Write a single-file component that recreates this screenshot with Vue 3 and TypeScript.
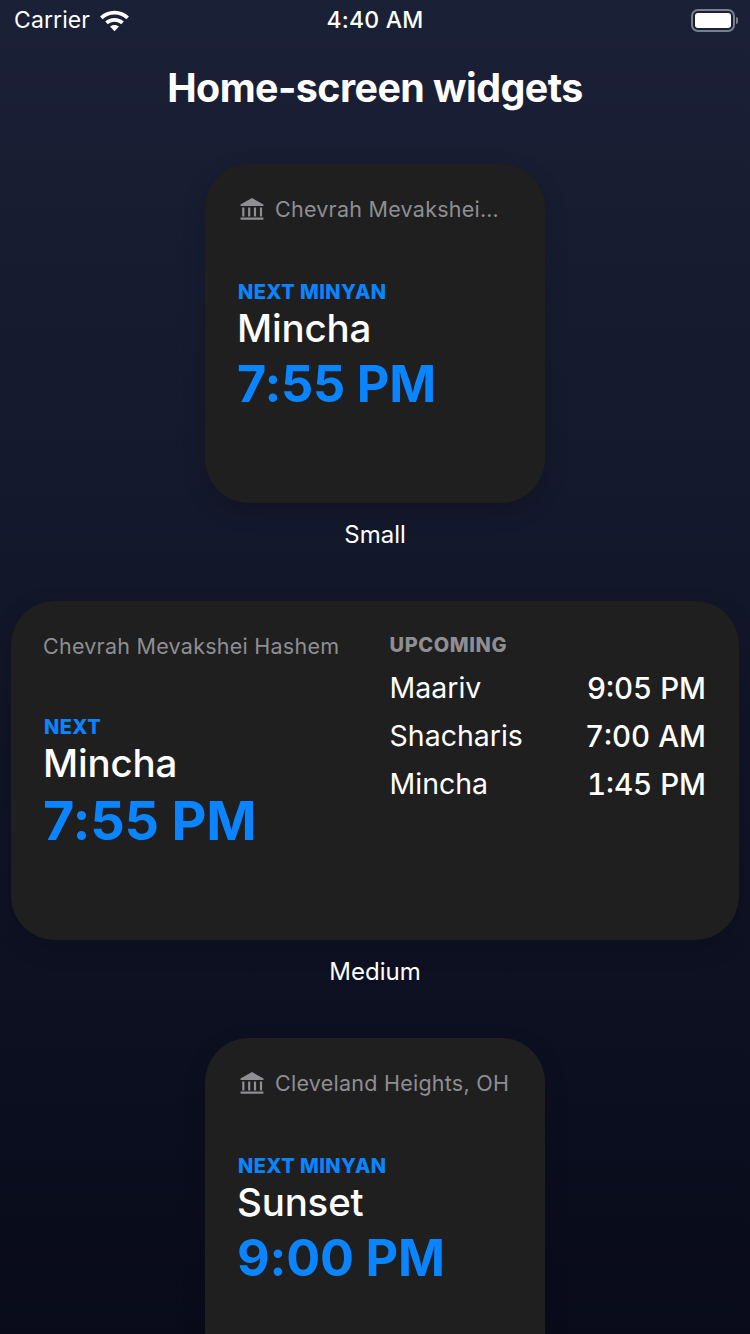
<script setup lang="ts">
interface Prayer {
  name: string
  time: string
}

const upcoming: Prayer[] = [
  { name: 'Maariv', time: '9:05 PM' },
  { name: 'Shacharis', time: '7:00 AM' },
  { name: 'Mincha', time: '1:45 PM' },
]
</script>

<template>
  <div class="screen">
    <header class="status">
      <div class="status-left">
        <span>Carrier</span>
        <svg class="wifi" width="33" height="25" viewBox="0 0 32 24">
          <path d="M16 2.500c5.400 0 10.300 2 14 5.500l-2.500 2.700C24.500 7.900 20.500 6.200 16 6.200S7.500 7.900 4.500 10.700L2 8C5.700 4.500 10.600 2.500 16 2.500z" fill="#fff" />
          <path d="M16 9.500c3.500 0 6.600 1.300 9 3.500l-2.500 2.700c-1.700-1.600-4-2.500-6.500-2.500s-4.800.9-6.500 2.500L7 13c2.400-2.200 5.500-3.500 9-3.500z" fill="#fff" />
          <path d="M16 16.300c1.700 0 3.200.6 4.300 1.600L16 22.500l-4.300-4.600c1.100-1 2.600-1.600 4.300-1.600z" fill="#fff" />
        </svg>
      </div>
      <span class="clock">4:40 AM</span>
      <div class="status-right">
        <span class="battery"><span class="battery-fill"></span></span>
        <span class="battery-cap"></span>
      </div>
    </header>

    <h1 class="title">Home-screen widgets</h1>

    <section class="widget-block">
      <article class="widget small">
        <div class="location">
          <svg class="bank" width="26" height="26" viewBox="0 0 26 26">
            <path d="M13 2 24.500 8.500V10h-23V8.500z" fill="#8e8e93" />
            <path d="M3.200 11.500h2.200v9H3.200zM9.100 11.500h2.200v9H9.100zM14.900 11.500h2.200v9h-2.200zM20.900 11.500h2.200v9h-2.200z" fill="#8e8e93" />
            <rect x="1.500" y="21.500" width="23" height="2.200" rx=".6" fill="#8e8e93" />
          </svg>
          <span class="location-text">Chevrah Mevakshei…</span>
        </div>
        <div class="next">
          <div class="eyebrow">NEXT MINYAN</div>
          <div class="prayer">Mincha</div>
          <div class="time">7:55 PM</div>
        </div>
      </article>
      <div class="caption">Small</div>
    </section>

    <section class="widget-block">
      <article class="widget medium">
        <div class="medium-left">
          <div class="location-text plain">Chevrah Mevakshei Hashem</div>
          <div class="next next-medium">
            <div class="eyebrow">NEXT</div>
            <div class="prayer">Mincha</div>
            <div class="time time-large">7:55 PM</div>
          </div>
        </div>
        <div class="medium-right">
          <div class="upcoming-label">UPCOMING</div>
          <div v-for="item in upcoming" :key="item.name" class="row">
            <span>{{ item.name }}</span>
            <span class="row-time">{{ item.time }}</span>
          </div>
        </div>
      </article>
      <div class="caption">Medium</div>
    </section>

    <section class="widget-block">
      <article class="widget small">
        <div class="location">
          <svg class="bank" width="26" height="26" viewBox="0 0 26 26">
            <path d="M13 2 24.500 8.500V10h-23V8.500z" fill="#8e8e93" />
            <path d="M3.200 11.500h2.200v9H3.200zM9.100 11.500h2.200v9H9.100zM14.900 11.500h2.200v9h-2.200zM20.900 11.500h2.200v9h-2.200z" fill="#8e8e93" />
            <rect x="1.500" y="21.500" width="23" height="2.200" rx=".6" fill="#8e8e93" />
          </svg>
          <span class="location-text">Cleveland Heights, OH</span>
        </div>
        <div class="next">
          <div class="eyebrow">NEXT MINYAN</div>
          <div class="prayer">Sunset</div>
          <div class="time">9:00 PM</div>
        </div>
      </article>
    </section>
  </div>
</template>

<style>
html,
body {
  margin: 0;
  background: #0a0c1c;
}
</style>

<style scoped>
.screen {
  width: 750px;
  height: 1334px;
  overflow: hidden;
  background: linear-gradient(180deg, #1a2036 0%, #090b1a 100%);
  color: #fff;
  font-family: Inter, "Liberation Sans", sans-serif;
  display: flex;
  flex-direction: column;
  align-items: center;
}

.screen > * {
  flex: none;
}

.status {
  width: 100%;
  height: 40px;
  box-sizing: border-box;
  padding: 0 12px 0 14px;
  display: grid;
  grid-template-columns: 1fr auto 1fr;
  align-items: center;
  font-size: 23px;
  font-weight: 500;
}

.status-left {
  display: flex;
  align-items: center;
  gap: 8px;
  font-weight: 400;
  letter-spacing: 0.1px;
}

.clock {
  font-weight: 500;
  letter-spacing: 0.2px;
  margin-left: -2px;
}

.status-right {
  display: flex;
  justify-content: flex-end;
  align-items: center;
  gap: 1px;
}

.battery {
  width: 44px;
  height: 23px;
  box-sizing: border-box;
  border: 2px solid #7a7d8a;
  border-radius: 7px;
  padding: 2px;
  display: block;
}

.battery-fill {
  display: block;
  width: 100%;
  height: 100%;
  background: #fff;
  border-radius: 3px;
}

.battery-cap {
  width: 2px;
  height: 7px;
  border-radius: 0 2px 2px 0;
  background: #7a7d8a;
}

.title {
  margin: 22px 0 0;
  font-size: 39.400px;
  line-height: 52px;
  font-weight: 700;
  letter-spacing: -0.55px;
}

.widget-block {
  margin-top: 50px;
  display: flex;
  flex-direction: column;
  align-items: center;
}

.widget {
  height: 339px;
  box-sizing: border-box;
  border-radius: 44px;
  background: #1f1f1f;
  box-shadow: 0 8px 24px rgba(0, 0, 0, 0.16);
}

.small {
  width: 340px;
  padding: 32px 32px 0;
}

.medium {
  width: 728px;
  padding: 30px 33px 0 32px;
  display: flex;
  gap: 51.500px;
}

.location {
  display: flex;
  align-items: center;
  gap: 10px;
  height: 26px;
  margin-left: 2px;
}

.location-text {
  font-size: 21.500px;
  color: #8e8e93;
  white-space: nowrap;
  letter-spacing: 0.25px;
}

.plain {
  display: block;
  line-height: 30px;
}

.next {
  margin-top: 58px;
  display: flex;
  flex-direction: column;
}

.next-medium {
  margin-top: 54px;
}

.eyebrow {
  font-size: 20px;
  line-height: 25px;
  font-weight: 800;
  color: #0a84ff;
  letter-spacing: 0.42px;
  margin-left: 1px;
}

.prayer {
  font-size: 38.500px;
  line-height: 46px;
  font-weight: 500;
  letter-spacing: -0.2px;
  margin-bottom: 2px;
}

.time {
  font-size: 50.400px;
  line-height: 62px;
  font-weight: 650;
  color: #0a84ff;
  letter-spacing: -0.2px;
}

.time-large {
  font-size: 54px;
  line-height: 66px;
}

.medium-left {
  width: 295px;
  flex: none;
}

.medium-right {
  flex: 1;
  display: flex;
  flex-direction: column;
}

.upcoming-label {
  font-size: 20px;
  line-height: 26px;
  font-weight: 800;
  color: #8e8e93;
  letter-spacing: 0.6px;
  margin-top: 1px;
  margin-bottom: 6px;
}

.row {
  display: flex;
  justify-content: space-between;
  align-items: center;
  font-size: 28.500px;
  line-height: 48px;
  height: 48px;
}

.row-time {
  font-size: 29.500px;
  font-weight: 500;
  font-variant-numeric: tabular-nums;
}

.caption {
  margin-top: 16px;
  font-size: 24px;
  line-height: 32px;
}
</style>
